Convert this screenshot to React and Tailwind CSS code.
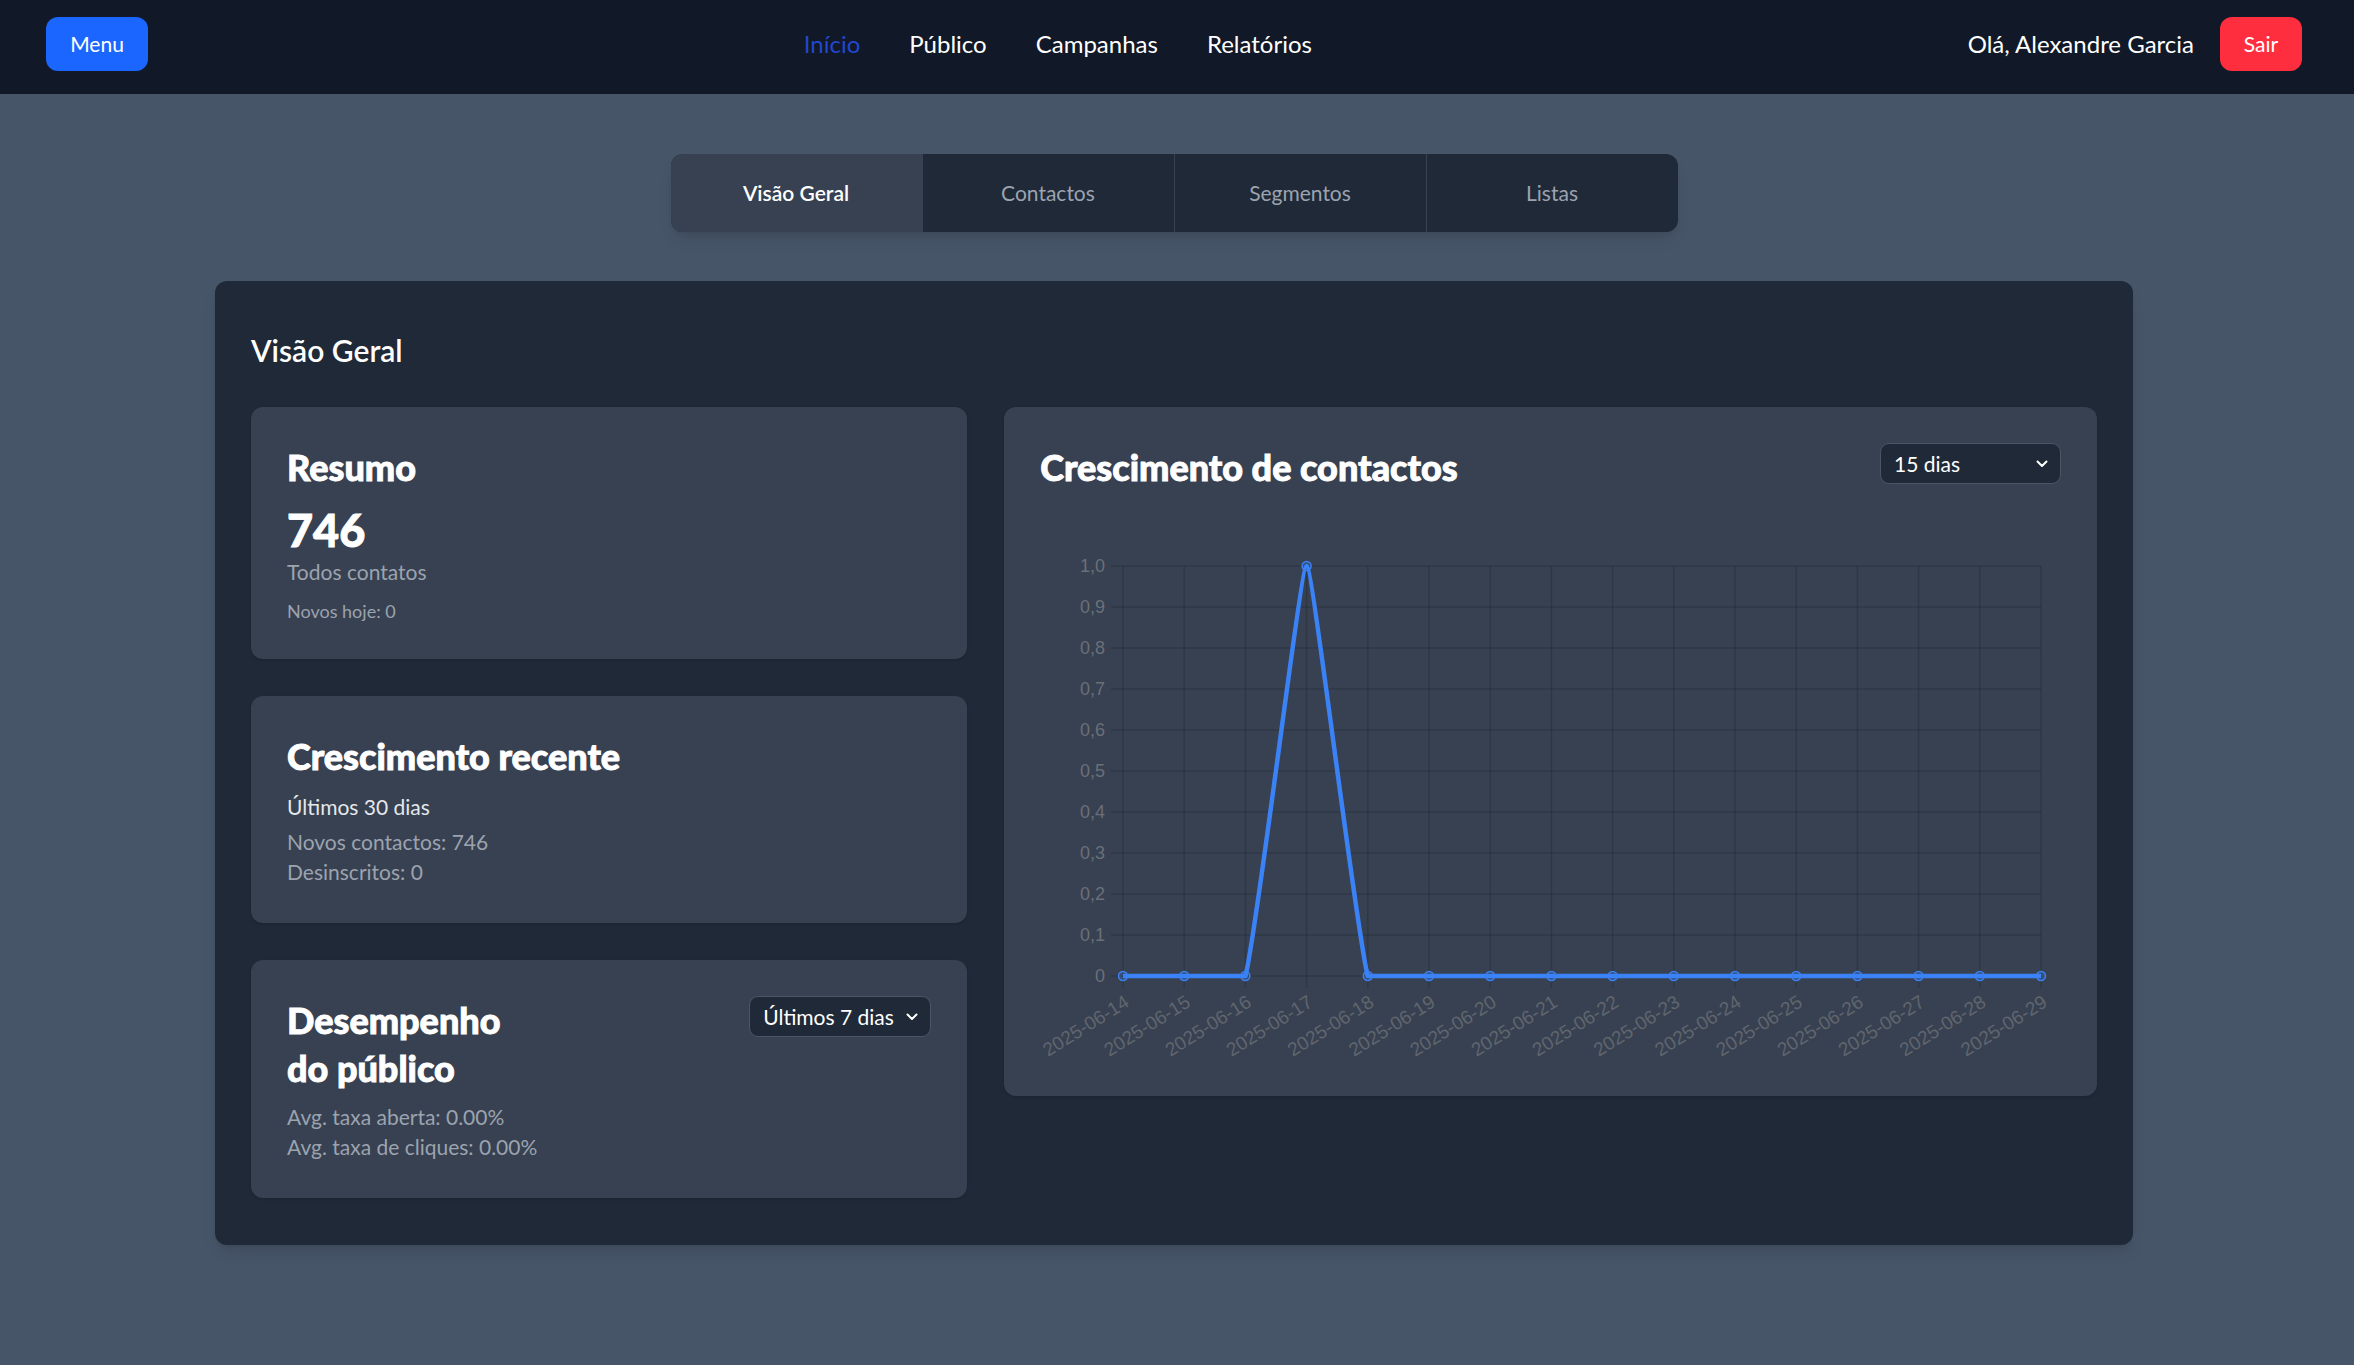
import React from 'react';

const NAV = ['Início', 'Público', 'Campanhas', 'Relatórios'];
const TABS = ['Visão Geral', 'Contactos', 'Segmentos', 'Listas'];

const DATES = Array.from({ length: 16 }, (_, i) => `2025-06-${String(14 + i).padStart(2, '0')}`);
const VALUES = DATES.map((_, i) => (i === 3 ? 1 : 0));

// plot area inside the svg
const X0 = 83;
const X1 = 1001;
const Y0 = 56;
const Y1 = 466;

function Chevron() {
  return (
    <svg width="12" height="8" viewBox="0 0 12 8" fill="none">
      <path d="M1.5 1.5 L6 6 L10.5 1.5" stroke="#ffffff" strokeWidth="2" strokeLinecap="round" strokeLinejoin="round" />
    </svg>
  );
}

function Select({ label, width }) {
  return (
    <div
      className={`flex items-center justify-between h-[41px] ${width} pl-[13px] pr-[12px] rounded-[9px] bg-[#1f2937] border border-[#4b5563] text-[21px] text-white`}
    >
      <span>{label}</span>
      <Chevron />
    </div>
  );
}

function buildPath(pts, tension) {
  const cps = pts.map((p, i) => {
    const prev = pts[i - 1] || p;
    const next = pts[i + 1] || p;
    const d01 = Math.hypot(p.x - prev.x, p.y - prev.y);
    const d12 = Math.hypot(next.x - p.x, next.y - p.y);
    let s01 = d01 / (d01 + d12);
    let s12 = d12 / (d01 + d12);
    if (isNaN(s01)) s01 = 0;
    if (isNaN(s12)) s12 = 0;
    const fa = tension * s01;
    const fb = tension * s12;
    const clampY = (y) => Math.min(Y1, Math.max(Y0, y));
    return {
      px: p.x - fa * (next.x - prev.x),
      py: clampY(p.y - fa * (next.y - prev.y)),
      nx: p.x + fb * (next.x - prev.x),
      ny: clampY(p.y + fb * (next.y - prev.y)),
    };
  });
  let d = `M ${pts[0].x} ${pts[0].y}`;
  for (let i = 1; i < pts.length; i++) {
    d += ` C ${cps[i - 1].nx} ${cps[i - 1].ny} ${cps[i].px} ${cps[i].py} ${pts[i].x} ${pts[i].y}`;
  }
  return d;
}

function GrowthChart() {
  const step = (X1 - X0) / 15;
  const pts = VALUES.map((v, i) => ({ x: X0 + i * step, y: Y1 - v * (Y1 - Y0) }));
  const yTicks = Array.from({ length: 11 }, (_, k) => k);

  return (
    <svg width="1019" height="550" viewBox="0 0 1019 550" className="block overflow-visible">
      {yTicks.map((k) => {
        const y = Y1 - (k * (Y1 - Y0)) / 10;
        return (
          <g key={k}>
            <line x1={X0 - 12} x2={X1} y1={y} y2={y} stroke="rgba(0,0,0,0.14)" strokeWidth="1.5" />
            <text
              x={X0 - 18}
              y={y}
              textAnchor="end"
              dominantBaseline="central"
              fontSize="18"
              fill="#6b6f78"
              fontFamily="'Liberation Sans', Arial, sans-serif"
            >
              {k === 0 ? '0' : `${Math.floor(k / 10)},${k % 10}`}
            </text>
          </g>
        );
      })}
      {pts.map((p, i) => (
        <g key={i}>
          <line x1={p.x} x2={p.x} y1={Y0} y2={Y1 + 12} stroke="rgba(0,0,0,0.14)" strokeWidth="1.5" />
          <text
            transform={`translate(${p.x + 4} ${Y1 + 24}) rotate(-32)`}
            textAnchor="end"
            dominantBaseline="central"
            fontSize="19"
            fill="#60656e"
            fontFamily="'Liberation Sans', Arial, sans-serif"
          >
            {DATES[i]}
          </text>
        </g>
      ))}
      <path d={buildPath(pts, 0.1)} fill="none" stroke="#3b82f6" strokeWidth="4.5" strokeLinejoin="round" />
      {pts.map((p, i) => (
        <circle key={i} cx={p.x} cy={p.y} r="4.5" fill="rgba(59,130,246,0.25)" stroke="#3b82f6" strokeWidth="1.5" />
      ))}
    </svg>
  );
}

export default function App() {
  return (
    <div className="min-h-screen bg-[#475569] pb-[60px] font-['Lato','Noto_Sans',sans-serif] text-white">
      {/* Top bar */}
      <header className="h-[94px] bg-[#111827] flex items-center justify-between pl-[46px] pr-[52px] pb-[6px]">
        <button className="w-[102px] h-[54px] rounded-[12px] bg-[#1a66ff] text-[21px] text-white">Menu</button>
        <nav className="flex items-center gap-[49px] text-[24px]">
          {NAV.map((item, i) => (
            <a key={item} className={i === 0 ? 'text-[#2247d0]' : 'text-white'}>
              {item}
            </a>
          ))}
        </nav>
        <div className="flex items-center gap-[26px]">
          <span className="text-[24px]">Olá, Alexandre Garcia</span>
          <button className="w-[82px] h-[54px] rounded-[12px] bg-[#ff2e3e] text-[21px] text-white">Sair</button>
        </div>
      </header>

      <div className="w-[2348px]">
        {/* Tabs */}
        <div className="flex justify-center mt-[60px]">
          <div className="flex w-[1007px] h-[78px] rounded-[12px] overflow-hidden shadow-lg bg-[#1f2937]">
            {TABS.map((tab, i) => (
              <button
                key={tab}
                className={`flex-1 flex items-center justify-center text-[21px] ${
                  i === 0
                    ? 'bg-[#374151] text-white font-semibold'
                    : 'text-[#9ca3af] border-l border-[#374151]'
                }`}
              >
                {tab}
              </button>
            ))}
          </div>
        </div>

        {/* Main panel */}
        <main className="w-[1918px] mx-auto mt-[49px] bg-[#1f2937] rounded-[12px] shadow-lg pt-[48px] px-[36px] pb-[47px]">
          <h2 className="text-[30px] leading-[42px] font-semibold mb-[36px]">Visão Geral</h2>

          <div className="grid grid-cols-5 gap-[37px] items-start">
            <div className="col-span-2 flex flex-col gap-[37px]">
              <section className="bg-[#374151] rounded-[12px] p-[36px] shadow">
                <h3 className="text-[36px] leading-[48px] font-black [-webkit-text-stroke:0.9px_white]">Resumo</h3>
                <p className="text-[45px] leading-[54px] font-black mt-[12px] [-webkit-text-stroke:0.9px_white]">746</p>
                <p className="text-[21px] leading-[30px] text-[#9ca3af]">Todos contatos</p>
                <p className="text-[18px] leading-[24px] text-[#9ca3af] mt-[12px]">Novos hoje: 0</p>
              </section>

              <section className="bg-[#374151] rounded-[12px] p-[36px] shadow">
                <h3 className="text-[36px] leading-[48px] font-black [-webkit-text-stroke:0.9px_white]">Crescimento recente</h3>
                <p className="text-[21px] leading-[30px] text-[#e5e7eb] mt-[12px]">Últimos 30 dias</p>
                <div className="mt-[5px] text-[21px] leading-[30px] text-[#9ca3af]">
                  <p>Novos contactos: 746</p>
                  <p>Desinscritos: 0</p>
                </div>
              </section>

              <section className="bg-[#374151] rounded-[12px] p-[36px] shadow">
                <div className="flex items-start justify-between">
                  <h3 className="w-[260px] text-[36px] leading-[48px] font-black [-webkit-text-stroke:0.9px_white]">
                    Desempenho do público
                  </h3>
                  <Select label="Últimos 7 dias" width="w-[182px]" />
                </div>
                <div className="mt-[10px] text-[21px] leading-[30px] text-[#9ca3af]">
                  <p>Avg. taxa aberta: 0.00%</p>
                  <p>Avg. taxa de cliques: 0.00%</p>
                </div>
              </section>
            </div>

            <section className="col-span-3 bg-[#374151] rounded-[12px] p-[36px] shadow">
              <div className="flex items-start justify-between">
                <h3 className="text-[36px] leading-[48px] font-black [-webkit-text-stroke:0.9px_white]">
                  Crescimento de contactos
                </h3>
                <Select label="15 dias" width="w-[181px]" />
              </div>
              <div className="mt-[19px]">
                <GrowthChart />
              </div>
            </section>
          </div>
        </main>
      </div>
    </div>
  );
}
